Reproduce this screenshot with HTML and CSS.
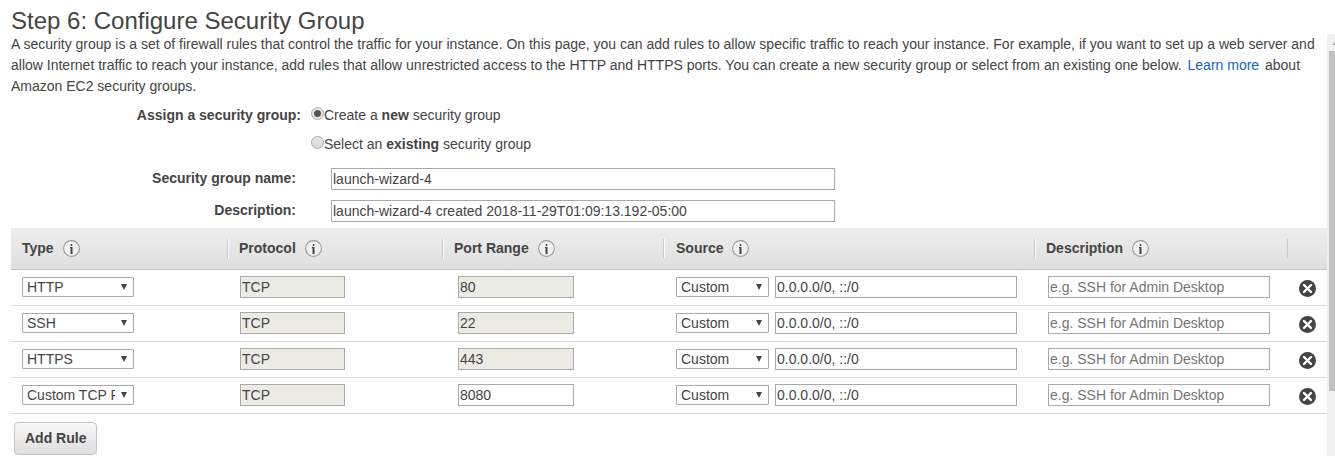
FILE: index.html
```html
<!DOCTYPE html>
<html lang="en">
<head>
<meta charset="utf-8">
<title>Step 6: Configure Security Group</title>
<link rel="stylesheet" href="styles.css">
</head>
<body>
<svg class="sprite" aria-hidden="true">
  <symbol id="info" viewBox="0 0 17 17">
    <circle cx="8.5" cy="8.5" r="7.9" fill="#f0f0f0" stroke="#999" stroke-width="1.1"/>
    <path d="M7.5 4h2v2h-2zM7 7h3v7h-3z" fill="#999"/>
    <path d="M8 4h1v2h-1zM7 7h2v6h-1v-5h-1zM8 7h1v7h-1z" fill="#444"/>
  </symbol>
  <symbol id="remove" viewBox="0 0 17 17">
    <circle cx="8.5" cy="8.5" r="8.5" fill="#444"/>
    <path d="M5 5l7 7M12 5l-7 7" stroke="#fff" stroke-width="2.4" stroke-linecap="round"/>
  </symbol>
</svg>
<h1 class="title">Step 6: Configure Security Group</h1>
<div class="panel">
  <main class="content">
    <p class="intro">A security group is a set of firewall rules that control the traffic for your instance. On this page, you can add rules to allow specific traffic to reach your instance. For example, if you want to set up a web server and allow Internet traffic to reach your instance, add rules that allow unrestricted access to the HTTP and HTTPS ports. You can create a new security group or select from an existing one below. <a class="link" href="#">Learn more</a> about Amazon EC2 security groups.</p>
    <div class="assign" role="radiogroup" aria-labelledby="assign-label">
      <span class="assign-label" id="assign-label">Assign a security group:</span>
      <div class="choices">
        <label class="choice"><input class="radio" type="radio" name="assign" checked><span>Create a <b>new</b> security group</span></label>
        <label class="choice"><input class="radio" type="radio" name="assign"><span>Select an <b>existing</b> security group</span></label>
      </div>
    </div>
    <div class="fields">
      <label class="field-label" for="name">Security group name:</label>
      <input class="input" id="name" type="text" value="launch-wizard-4">
      <label class="field-label" for="desc">Description:</label>
      <input class="input" id="desc" type="text" value="launch-wizard-4 created 2018-11-29T01:09:13.192-05:00">
    </div>
    <table class="rules">
      <colgroup><col class="col-type"><col class="col-protocol"><col class="col-port"><col class="col-source"><col class="col-desc"><col class="col-remove"></colgroup>
      <thead>
        <tr>
          <th><div class="head">Type <svg class="icon"><use href="#info"/></svg></div></th>
          <th><div class="head">Protocol <svg class="icon"><use href="#info"/></svg></div></th>
          <th><div class="head">Port Range <svg class="icon"><use href="#info"/></svg></div></th>
          <th><div class="head">Source <svg class="icon"><use href="#info"/></svg></div></th>
          <th><div class="head">Description <svg class="icon"><use href="#info"/></svg></div></th>
          <th></th>
        </tr>
      </thead>
      <tbody>
        <tr>
          <td><select class="select type" aria-label="Type"><option>HTTP</option></select></td>
          <td><input class="input protocol" aria-label="Protocol" value="TCP" disabled></td>
          <td class="port-cell"><input class="input port" aria-label="Port range" value="80" disabled></td>
          <td><div class="source"><select class="select origin" aria-label="Source"><option>Custom</option></select><input class="input cidr" aria-label="Source addresses" value="0.0.0.0/0, ::/0"></div></td>
          <td class="desc-cell"><input class="input" aria-label="Rule description" placeholder="e.g. SSH for Admin Desktop"></td>
          <td><button class="remove" aria-label="Remove rule"><svg class="icon"><use href="#remove"/></svg></button></td>
        </tr>
        <tr>
          <td><select class="select type" aria-label="Type"><option>SSH</option></select></td>
          <td><input class="input protocol" aria-label="Protocol" value="TCP" disabled></td>
          <td class="port-cell"><input class="input port" aria-label="Port range" value="22" disabled></td>
          <td><div class="source"><select class="select origin" aria-label="Source"><option>Custom</option></select><input class="input cidr" aria-label="Source addresses" value="0.0.0.0/0, ::/0"></div></td>
          <td class="desc-cell"><input class="input" aria-label="Rule description" placeholder="e.g. SSH for Admin Desktop"></td>
          <td><button class="remove" aria-label="Remove rule"><svg class="icon"><use href="#remove"/></svg></button></td>
        </tr>
        <tr>
          <td><select class="select type" aria-label="Type"><option>HTTPS</option></select></td>
          <td><input class="input protocol" aria-label="Protocol" value="TCP" disabled></td>
          <td class="port-cell"><input class="input port" aria-label="Port range" value="443" disabled></td>
          <td><div class="source"><select class="select origin" aria-label="Source"><option>Custom</option></select><input class="input cidr" aria-label="Source addresses" value="0.0.0.0/0, ::/0"></div></td>
          <td class="desc-cell"><input class="input" aria-label="Rule description" placeholder="e.g. SSH for Admin Desktop"></td>
          <td><button class="remove" aria-label="Remove rule"><svg class="icon"><use href="#remove"/></svg></button></td>
        </tr>
        <tr>
          <td><select class="select type" aria-label="Type"><option>Custom TCP Rule</option></select></td>
          <td><input class="input protocol" aria-label="Protocol" value="TCP" disabled></td>
          <td class="port-cell"><input class="input port" aria-label="Port range" value="8080"></td>
          <td><div class="source"><select class="select origin" aria-label="Source"><option>Custom</option></select><input class="input cidr" aria-label="Source addresses" value="0.0.0.0/0, ::/0"></div></td>
          <td class="desc-cell"><input class="input" aria-label="Rule description" placeholder="e.g. SSH for Admin Desktop"></td>
          <td><button class="remove" aria-label="Remove rule"><svg class="icon"><use href="#remove"/></svg></button></td>
        </tr>
      </tbody>
    </table>
    <button class="add">Add Rule</button>
  </main>
  <div class="scrollbar" aria-hidden="true">
    <svg class="scroll-arrow" viewBox="0 0 6 17"><path d="M3 11l4-4v4z" fill="#a3a3a3"/></svg>
    <div class="thumb"></div>
  </div>
</div>
</body>
</html>
```

FILE: styles.css
```css
* {
  box-sizing: border-box;
}

body {
  margin: 0;
  min-height: 100vh;
  display: flex;
  flex-direction: column;
  background: #fff;
  color: #444;
  font: 14px/21px "Liberation Sans", Arial, sans-serif;
}

.sprite {
  display: none;
}

.title {
  margin: 0;
  padding: 8px 11px 0;
  font-size: 24px;
  font-weight: normal;
  line-height: 26px;
}

.panel {
  flex: 1;
  display: flex;
}

.content {
  flex: 1;
  min-width: 0;
  padding-left: 11px;
}

.intro {
  margin: 0;
  padding-right: 8px;
}

.link {
  margin: 0 2px;
  color: #1166bb;
  text-decoration: none;
}

.assign {
  display: flex;
  gap: 10px;
  margin-top: 4px;
  line-height: 29px;
}

.assign-label {
  width: 290px;
  text-align: right;
  font-weight: bold;
}

.choice {
  display: flex;
  align-items: flex-start;
}

.radio {
  appearance: none;
  width: 13px;
  height: 13px;
  margin: 6px 0 0;
  border: 1px solid #aaa;
  border-radius: 50%;
  background: linear-gradient(#e8e8e8, #d8d8d8);
}

.radio:checked {
  background: radial-gradient(circle, #555 3px, #e6e6e6 4px);
}

.fields {
  display: grid;
  grid-template-columns: 285px minmax(0, 504px);
  column-gap: 35px;
  row-gap: 10px;
  margin: 9px 0 6px;
}

.field-label {
  text-align: right;
  font-weight: bold;
}

.input {
  display: block;
  width: 100%;
  height: 22px;
  padding: 1px;
  border: 1px solid #a9a9a9;
  border-radius: 0;
  background: #fff;
  color: #444;
  font: inherit;
}

.input:disabled {
  background: #ebebe4;
}

.input::placeholder {
  color: #757575;
}

.select {
  appearance: none;
  display: block;
  height: 20px;
  padding: 0 18px 0 4px;
  border: 1px solid #a9a9a9;
  border-radius: 1px;
  background: #fff url("data:image/svg+xml,%3Csvg xmlns='http://www.w3.org/2000/svg' width='6' height='6'%3E%3Cpath d='M0 0h6L3 6z' fill='%23444'/%3E%3C/svg%3E") no-repeat right 6px center;
  color: #444;
  font: inherit;
  line-height: 18px;
}

.type {
  width: 112px;
}

.protocol {
  width: 105px;
}

.port {
  width: 116px;
}

.origin {
  width: 93px;
}

.rules {
  width: 100%;
  table-layout: fixed;
  border-collapse: separate;
  border-spacing: 0;
}

.col-type {
  width: 217px;
}

.col-protocol {
  width: 215px;
}

.col-port {
  width: 221px;
}

.col-desc {
  width: 253px;
}

.col-remove {
  width: 39px;
}

.rules th {
  height: 42px;
  padding: 0 0 0 11px;
  border-bottom: 1px solid #c8c8c8;
  background:
    linear-gradient(#c8c8c8, #c8c8c8) no-repeat right center / 1px 19px,
    linear-gradient(#fff, #fff) no-repeat left center / 1px 19px,
    linear-gradient(#eee, #dfdfdf);
  text-align: left;
}

.rules th:first-child {
  background:
    linear-gradient(#c8c8c8, #c8c8c8) no-repeat right center / 1px 19px,
    linear-gradient(#eee, #dfdfdf);
}

.rules th:last-child {
  background: linear-gradient(#eee, #dfdfdf);
}

.rules th:nth-child(4) {
  padding-left: 12px;
}

.head {
  display: flex;
  align-items: center;
  gap: 9px;
}

.icon {
  display: block;
  width: 17px;
  height: 17px;
}

.rules td {
  height: 36px;
  padding: 0 0 2px 12px;
  border-bottom: 1px solid #ddd;
}

.rules td:first-child {
  padding-left: 11px;
}

.rules td:last-child {
  padding: 0 0 0 11px;
}

.rules .port-cell {
  padding-left: 15px;
}

.rules .desc-cell {
  padding: 0 18px 2px 13px;
}

.source {
  display: flex;
  align-items: center;
  gap: 6px;
  padding-right: 18px;
}

.cidr {
  flex: 1;
  width: auto;
  min-width: 0;
}

.remove {
  display: block;
  padding: 2px 0 0;
  border: 0;
  background: none;
}

.add {
  display: block;
  height: 33px;
  margin: 8px 0 0 3px;
  padding: 0 10px;
  border: 1px solid #c4c4c4;
  border-radius: 4px;
  background: linear-gradient(#f8f8f8, #dedede);
  color: #444;
  font: inherit;
  font-weight: bold;
}

.scrollbar {
  width: 8px;
  padding-left: 2px;
  background: #f1f1f1;
}

.scroll-arrow {
  display: block;
  width: 6px;
  height: 17px;
}

.thumb {
  height: 340px;
  background: #c1c1c1;
}
```
